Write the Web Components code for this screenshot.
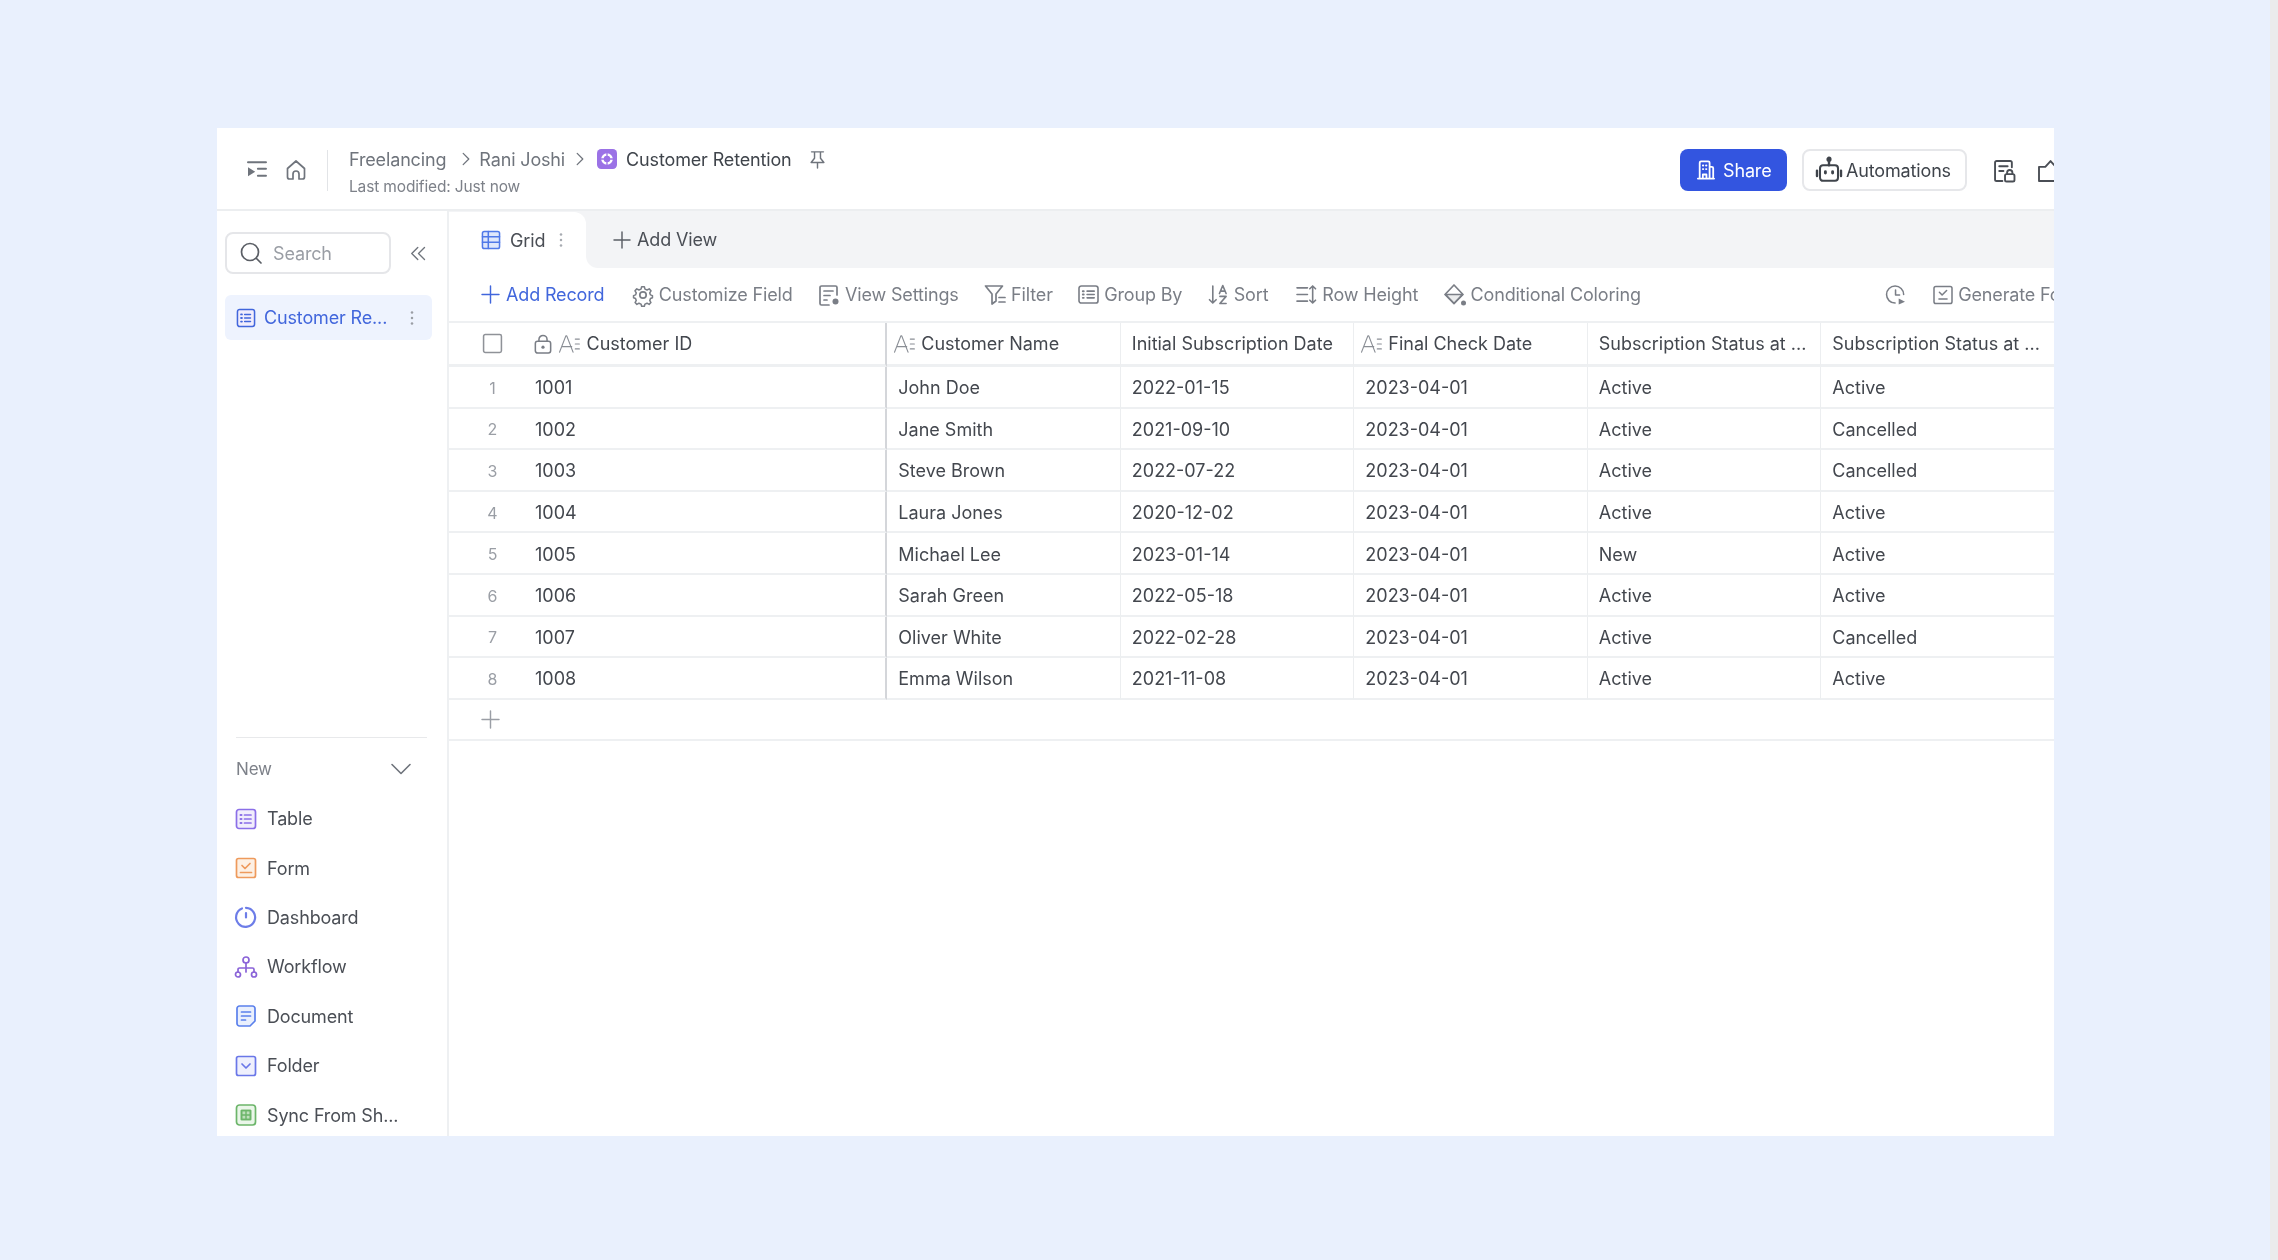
<!DOCTYPE html>
<html lang="en">
<head>
<meta charset="utf-8">
<title>Customer Retention</title>
<style>
  html, body { margin: 0; height: 100%; background: #e9f0fd; }
  body { font-family: Inter, "Liberation Sans", sans-serif; letter-spacing: -0.15px; overflow: hidden; }
</style>
</head>
<body>
<app-frame>
  <top-bar></top-bar>
  <side-bar slot="side"></side-bar>
  <view-tabs slot="main"></view-tabs>
  <tool-bar slot="main"></tool-bar>
  <data-grid slot="main"></data-grid>
</app-frame>

<script>
const ICONS = {
  collapse: `<path d="M2 3.500h20M13 10.500h9M13 18.500h9" stroke-width="2.200"/><path d="M2 9v10l8-5z" fill="currentColor" stroke="none"/>`,
  home: `<path d="M3.500 10.500 12 3l8.500 7.500V19a2 2 0 0 1-2 2H15v-5a3 3 0 0 0-6 0v5H5.500a2 2 0 0 1-2-2z"/>`,
  chevronRight: `<path d="m8 4 8 8-8 8"/>`,
  chevronDown: `<path d="m2 7 10 10L22 7"/>`,
  chevronsLeft: `<path d="m11 4-8 8 8 8M20 4l-8 8 8 8"/>`,
  pin: `<path d="M5 3h14M8.500 3v7.500l-4 5h15l-4-5V3M12 15.500V22"/>`,
  logo: `<rect x="0" y="0" width="24" height="24" rx="5" fill="#9b72e6" stroke="none"/><circle cx="12" cy="12" r="5.500" stroke="#fff" stroke-width="3"/><path d="M12 5v3M12 16v3M5 12h3M16 12h3" stroke="#9b72e6" stroke-width="1.600"/>`,
  building: `<path d="M5 21.500V4a1.500 1.500 0 0 1 1.500-1.500h8A1.500 1.500 0 0 1 16 4v17.500M16 8.500h2.500A1.500 1.500 0 0 1 20 10v11.500M3 21.500h18M8.500 21.500V17h4v4.500M8.500 7h.5M12 7h.5M8.500 11h.5M12 11h.5" stroke-width="2"/>`,
  robot: `<rect x="4.500" y="8" width="15" height="13" rx="2.500"/><path d="M12 8V4M2 12.500v4.500M22 12.500v4.500" stroke-width="2"/><circle cx="12" cy="3" r="1.300" fill="currentColor"/><path d="M9 13.500v1M15 13.500v1" stroke-width="2.400"/>`,
  docLock: `<path d="M19 9V4.500A1.500 1.500 0 0 0 17.500 3h-13A1.500 1.500 0 0 0 3 4.500v16A1.500 1.500 0 0 0 4.500 22H10M7 8h8M7 12.500h4"/><rect x="12.500" y="15.500" width="9" height="7" rx="1.500"/><path d="M14.500 15.500V14a2.500 2.500 0 0 1 5 0v1.500"/>`,
  bag: `<path d="M2 22V8.500h6L13 3l5 5.500h4V22z"/><circle cx="22" cy="15" r="2.500"/>`,
  grid: `<rect x="2.500" y="2.500" width="19" height="19" rx="2" fill="#dfe7fb"/><path d="M2.500 8.500h19M2.500 14.500h19M9 2.500v19"/>`,
  plus: `<path d="M12 2v20M2 12h20"/>`,
  dots: `<circle cx="12" cy="4" r="1.800" fill="currentColor" stroke="none"/><circle cx="12" cy="12" r="1.800" fill="currentColor" stroke="none"/><circle cx="12" cy="20" r="1.800" fill="currentColor" stroke="none"/>`,
  gear: `<path d="M10.500 3h3l.7 2.600 2.300 1 2.400-1.300 2 2.200-1.400 2.300.8 2.200 2.200.8v2.400l-2.200.8-.8 2.200 1.300 2.300-2 2-2.300-1.300-2.300 1-.7 2.500h-3l-.7-2.500-2.300-1-2.300 1.300-2-2 1.300-2.300-.8-2.200-2.200-.8v-2.400l2.200-.8.8-2.200-1.400-2.300 2-2.200 2.400 1.300 2.300-1z" transform="translate(1.200 1.100) scale(.9)"/><circle cx="12" cy="12" r="3.200"/>`,
  viewSettings: `<path d="M20 12V4.500A1.500 1.500 0 0 0 18.500 3h-14A1.500 1.500 0 0 0 3 4.500v16A1.500 1.500 0 0 0 4.500 22H12M7 8h9M7 12.500h6M7 17h3"/><circle cx="18.500" cy="18.500" r="3" fill="currentColor" stroke="none"/>`,
  filter: `<path d="M2.500 3h17l-6.500 8v7l-4 3v-10zM16 14.500h6M16 19h6"/>`,
  groupBy: `<rect x="2" y="3" width="20" height="18" rx="2.500"/><path d="M10.500 8.500H18M10.500 12H18M10.500 15.500H18"/><path d="M6 8.500h1M6 12h1M6 15.500h1" stroke-width="2"/>`,
  sort: `<path d="M6 3v18M2.500 17.500 6 21l3.500-3.500M13 11l3.500-8.500L20 11M14 8.500h5M13.500 14H20l-6.500 7.500H20"/>`,
  rowHeight: `<path d="M2 5h11M2 12h11M2 19h11M18.500 3v18M15.500 6l3-3 3 3M15.500 18l3 3 3-3"/>`,
  bucket: `<path d="M11 2 20 11.500 11 20.500 2 11.500z"/><path d="M2.500 11.500h17L11 20.500z" fill="currentColor" fill-opacity=".15"/><circle cx="20.500" cy="20" r="2.500" fill="currentColor" stroke="none"/>`,
  history: `<path d="M11 21a9.500 9.500 0 1 1 9.500-9.500M11.500 6.500V12h4.500"/><path d="M15 16l7 3.500-7 3z" fill="currentColor" stroke="none"/>`,
  generate: `<rect x="2" y="2.500" width="20" height="19" rx="2"/><path d="m8 9 3 3 5-5M7.500 16.500h9"/>`,
  checkbox: `<rect x="1.500" y="1.500" width="21" height="21" rx="2"/>`,
  lock: `<rect x="3.500" y="9" width="17" height="13" rx="2.500"/><path d="M7.500 9V7a4.500 4.500 0 0 1 9 0v2"/><circle cx="12" cy="15.500" r="1.800" fill="currentColor" stroke="none"/>`,
  textField: `<path d="m1.500 21 7-18h1l7 18M4 15h11M19 6.500h4.500M19 12h4.500M19 17.500h4.500" stroke-width="1.300"/>`,
  search: `<circle cx="11" cy="11" r="8.500"/><path d="m17.500 17.500 4.500 4.500"/>`,
  table: `<rect x="2.500" y="2.500" width="19" height="19" rx="2.500" fill="#f1edfc"/><path d="M10.500 8H17M10.500 12H17M10.500 16H17"/><path d="M6.500 8h1M6.500 12h1M6.500 16h1" stroke-width="2"/>`,
  form: `<rect x="2.500" y="2.500" width="19" height="19" rx="2" fill="#fdf0e4"/><path d="m8 9.500 3 3 5-5M6.500 16.500h11"/>`,
  dashboard: `<path d="M8 3.500a9.500 9.500 0 1 0 4-.700M12 8v4.500" stroke-width="2.200"/>`,
  workflow: `<circle cx="12" cy="5" r="3"/><circle cx="4" cy="19.500" r="2.500"/><circle cx="20" cy="19.500" r="2.500"/><path d="M12 8v5M4 17v-2.500a1.500 1.500 0 0 1 1.500-1.500h13a1.500 1.500 0 0 1 1.500 1.500V17M12 13v4"/>`,
  document: `<path d="M3 4.500A2.500 2.500 0 0 1 5.500 2h13A2.500 2.500 0 0 1 21 4.500V17l-5 5H5.500A2.500 2.500 0 0 1 3 19.500z" fill="#eaf0fd"/><path d="M7.500 8h9M7.500 12h9M7.500 16h4"/>`,
  folder: `<rect x="2.500" y="2.500" width="19" height="19" rx="2" fill="#eff0fd"/><path d="m8 10 4 4 4-4"/>`,
  sync: `<rect x="2.500" y="2" width="19" height="20" rx="3" fill="#eaf6e9"/><path d="M7.500 7.500h9v9h-9z" fill="currentColor" fill-opacity=".35"/><path d="M7.500 7.500h9v9h-9zM12 7.500v9M7.500 12h9" stroke-width="1.400"/>`
};

class UiIcon extends HTMLElement {
  connectedCallback() {
    const size = this.getAttribute('size') || 20;
    const w = this.getAttribute('w') || 1.7;
    const vb = this.getAttribute('vb') || '2 2 20 20';
    this.attachShadow({ mode: 'open' }).innerHTML = `
      <style>
        :host { display: inline-flex; flex: none; width: ${size}px; height: ${size}px; color: ${this.getAttribute('color') || 'inherit'}; }
        svg { width: 100%; height: 100%; overflow: visible; }
      </style>
      <svg viewBox="${vb}" fill="none" stroke="currentColor" stroke-width="${w}" stroke-linecap="round" stroke-linejoin="round">${ICONS[this.getAttribute('name')]}</svg>`;
  }
}
customElements.define('ui-icon', UiIcon);

class AppFrame extends HTMLElement {
  constructor() {
    super();
    this.attachShadow({ mode: 'open' }).innerHTML = `
      <style>
        :host { display: flex; width: 2278px; height: 1260px; box-sizing: border-box; padding: 128px 0 0 217px; }
        .window { width: 1837px; height: 1008px; background: #fff; overflow: hidden; display: flex; flex-direction: column; flex: none; filter: blur(.5px); }
        .body { flex: 1; display: flex; min-height: 0; }
        .main { flex: 1; min-width: 0; display: flex; flex-direction: column; }
        .edge { width: 8px; height: 1260px; margin: -128px 0 0 216px; background: #ebebec; flex: none; }
      </style>
      <div class="window">
        <slot></slot>
        <div class="body">
          <slot name="side"></slot>
          <div class="main"><slot name="main"></slot></div>
        </div>
      </div>
      <div class="edge"></div>`;
  }
}
customElements.define('app-frame', AppFrame);

class TopBar extends HTMLElement {
  constructor() {
    super();
    this.attachShadow({ mode: 'open' }).innerHTML = `
      <style>
        :host { display: flex; align-items: center; height: 83px; box-sizing: border-box; flex: none; padding: 3px 0 0 31px; border-bottom: 2px solid #eceef0; color: #6f747c; font-size: 18px; }
        .sep { width: 1px; height: 41px; background: #e2e4e7; margin: 0 21px 0 21.500px; }
        .crumbs { display: flex; flex-direction: column; gap: 6px; padding-top: 4px; }
        .path { display: flex; align-items: center; height: 24px; white-space: nowrap; }
        .sub { font-size: 15.500px; line-height: 20px; color: #7d8189; }
        .cur { color: #3f444b; }
        .actions { margin-left: auto; margin-right: -6px; display: flex; align-items: center; }
        button { font: inherit; letter-spacing: inherit; height: 42px; box-sizing: border-box; display: flex; align-items: center; border-radius: 8px; }
        .share { width: 107px; padding: 0 0 0 17px; gap: 8px; background: #3355e0; border: 0; color: #fff; }
        .auto { width: 165px; margin-left: 15px; padding: 0 0 0 13px; gap: 5px; background: #fff; border: 2px solid #e6e7ea; color: #3f444b; }
      </style>
      <ui-icon name="collapse" size="18"></ui-icon>
      <ui-icon name="home" size="20" style="margin-left:19.500px"></ui-icon>
      <div class="sep"></div>
      <div class="crumbs">
        <div class="path">
          <span>Freelancing</span>
          <ui-icon name="chevronRight" size="14" style="margin:0 6px 0 13px" w="1.800"></ui-icon>
          <span>Rani Joshi</span>
          <ui-icon name="chevronRight" size="14" style="margin:0 10px 0 8px" w="1.800"></ui-icon>
          <ui-icon name="logo" vb="0 0 24 24" size="20"></ui-icon>
          <span class="cur" style="margin-left:9px">Customer Retention</span>
          <ui-icon name="pin" size="17" style="margin-left:17px"></ui-icon>
        </div>
        <div class="sub">Last modified: Just now</div>
      </div>
      <div class="actions">
        <button class="share"><ui-icon name="building" size="18"></ui-icon>Share</button>
        <button class="auto"><ui-icon name="robot" size="24" color="#3f444b"></ui-icon>Automations</button>
        <ui-icon name="docLock" size="21" color="#4a4e55" w="1.800" style="margin-left:27px"></ui-icon>
        <ui-icon name="bag" size="21" color="#4a4e55" w="1.800" style="margin-left:24px"></ui-icon>
      </div>`;
  }
}
customElements.define('top-bar', TopBar);

class NavItem extends HTMLElement {
  connectedCallback() {
    this.attachShadow({ mode: 'open' }).innerHTML = `
      <style>
        :host { display: flex; flex: none; align-items: center; gap: 11px; height: 49.400px; color: #4a4e55; font-size: 18px; white-space: nowrap; }
      </style>
      <ui-icon name="${this.getAttribute('icon')}" size="20" color="${this.getAttribute('color')}"></ui-icon>
      <slot></slot>`;
  }
}
customElements.define('nav-item', NavItem);

class SideBar extends HTMLElement {
  constructor() {
    super();
    this.attachShadow({ mode: 'open' }).innerHTML = `
      <style>
        :host { display: flex; flex-direction: column; flex: none; width: 231.500px; box-sizing: border-box; padding: 21px 0 0 8px; border-right: 2px solid #eef0f2; font-size: 18px; overflow: hidden; }
        .top { display: flex; align-items: center; flex: none; }
        .search { width: 166px; height: 42px; box-sizing: border-box; border: 2px solid #e5e6e9; border-radius: 8px; display: flex; align-items: center; gap: 12px; padding-left: 14px; color: #9a9ea5; }
        .search ui-icon { color: #5a5e65; }
        .active { flex: none; width: 207px; height: 45px; box-sizing: border-box; margin-top: 21px; border-radius: 6px; background: #eef3fe; display: flex; align-items: center; padding: 0 13px 0 12px; gap: 9px; color: #4166dc; }
        .active span { flex: 1; white-space: nowrap; }
        .new { flex: none; margin: 396.500px 0 0 11px; width: 191px; }
        hr { border: 0; height: 1.500px; background: #e8e9eb; margin: 0; }
        .head { height: 56px; box-sizing: border-box; padding: 6px 17px 0 0; display: flex; align-items: center; justify-content: space-between; color: #7d8189; font-size: 17px; }
      </style>
      <div class="top">
        <div class="search"><ui-icon name="search" size="20"></ui-icon>Search</div>
        <ui-icon name="chevronsLeft" size="15" color="#6f747c" w="1.800" style="margin-left:20px"></ui-icon>
      </div>
      <div class="active">
        <ui-icon name="table" size="18" color="#4166dc"></ui-icon>
        <span>Customer Re...</span>
        <ui-icon name="dots" size="14" color="#9a9ea5"></ui-icon>
      </div>
      <div class="new">
        <hr>
        <div class="head">New<ui-icon name="chevronDown" size="18" color="#6f747c" w="1.800"></ui-icon></div>
        <nav-item icon="table" color="#8b6fe8">Table</nav-item>
        <nav-item icon="form" color="#ee9a5c">Form</nav-item>
        <nav-item icon="dashboard" color="#6d7de8">Dashboard</nav-item>
        <nav-item icon="workflow" color="#8a63d8">Workflow</nav-item>
        <nav-item icon="document" color="#5b80ec">Document</nav-item>
        <nav-item icon="folder" color="#6a77e8">Folder</nav-item>
        <nav-item icon="sync" color="#6cb56a">Sync From Sh...</nav-item>
      </div>`;
  }
}
customElements.define('side-bar', SideBar);

class ViewTabs extends HTMLElement {
  constructor() {
    super();
    this.attachShadow({ mode: 'open' }).innerHTML = `
      <style>
        :host { display: flex; height: 57px; flex: none; background: #f3f4f6; color: #4a4e55; font-size: 18px; }
        .tab { width: 137px; box-sizing: border-box; padding-left: 33.500px; display: flex; align-items: center; background: #fff; border-radius: 0 12px 0 0; margin-top: 1px; }
        .add { display: flex; align-items: center; gap: 7.500px; padding-left: 28px; background: #f3f4f6; border-radius: 0 0 0 12px; height: 100%; }
        .rest { flex: 1; }
        .notch { background: #fff; display: flex; }
      </style>
      <div class="tab">
        <ui-icon name="grid" size="18" color="#5079e8"></ui-icon>
        <span style="margin-left:10px">Grid</span>
        <ui-icon name="dots" size="14" color="#a7abb1" style="margin-left:9px"></ui-icon>
      </div>
      <div class="notch"><div class="add"><ui-icon name="plus" size="16" color="#5a5e65" w="1.800"></ui-icon>Add View</div></div>
      <div class="rest"></div>`;
  }
}
customElements.define('view-tabs', ViewTabs);

class ToolItem extends HTMLElement {
  connectedCallback() {
    const accent = this.hasAttribute('accent');
    this.attachShadow({ mode: 'open' }).innerHTML = `
      <style>
        :host { display: inline-flex; align-items: center; gap: ${this.getAttribute('gap') || 6}px; flex: none; white-space: nowrap; color: ${accent ? '#4166dc' : '#7a7e86'}; }
      </style>
      <ui-icon name="${this.getAttribute('icon')}" size="${this.getAttribute('size') || 20}"></ui-icon>
      <slot></slot>`;
  }
}
customElements.define('tool-item', ToolItem);

class ToolBar extends HTMLElement {
  constructor() {
    super();
    this.attachShadow({ mode: 'open' }).innerHTML = `
      <style>
        :host { display: flex; align-items: center; gap: 26.400px; height: 53px; flex: none; padding-left: 33.500px; font-size: 18px; }
      </style>
      <tool-item icon="plus" size="17" gap="7" accent style="margin-right:2px">Add Record</tool-item>
      <tool-item icon="gear">Customize Field</tool-item>
      <tool-item icon="viewSettings">View Settings</tool-item>
      <tool-item icon="filter">Filter</tool-item>
      <tool-item icon="groupBy" size="19">Group By</tool-item>
      <tool-item icon="sort" size="19" style="margin-right:2.500px">Sort</tool-item>
      <tool-item icon="rowHeight" size="19">Row Height</tool-item>
      <tool-item icon="bucket">Conditional Coloring</tool-item>
      <ui-icon name="history" size="18" color="#7a7e86" style="margin-left:219.500px"></ui-icon>
      <tool-item icon="generate" size="18" style="margin-left:3px">Generate Form</tool-item>`;
  }
}
customElements.define('tool-bar', ToolBar);

const COLS = ['Customer Name', 'Initial Subscription Date', 'Final Check Date', 'Subscription Status at ...', 'Subscription Status at ...'];
const ROWS = [
  ['1001', 'John Doe', '2022-01-15', '2023-04-01', 'Active', 'Active'],
  ['1002', 'Jane Smith', '2021-09-10', '2023-04-01', 'Active', 'Cancelled'],
  ['1003', 'Steve Brown', '2022-07-22', '2023-04-01', 'Active', 'Cancelled'],
  ['1004', 'Laura Jones', '2020-12-02', '2023-04-01', 'Active', 'Active'],
  ['1005', 'Michael Lee', '2023-01-14', '2023-04-01', 'New', 'Active'],
  ['1006', 'Sarah Green', '2022-05-18', '2023-04-01', 'Active', 'Active'],
  ['1007', 'Oliver White', '2022-02-28', '2023-04-01', 'Active', 'Cancelled'],
  ['1008', 'Emma Wilson', '2021-11-08', '2023-04-01', 'Active', 'Active']
];

class DataGrid extends HTMLElement {
  constructor() {
    super();
    const head = COLS.map((c, i) => `<div class="cell hd">${i === 0 || i === 2 ? '<ui-icon name="textField" size="18" color="#8a8e95" style="margin:0 2px 0 -3px"></ui-icon>' : ''}${c}</div>`).join('');
    const body = ROWS.map((r, i) => `
      <div class="cell first row"><span class="num">${i + 1}</span>${r[0]}</div>
      ${r.slice(1).map(v => `<div class="cell row">${v}</div>`).join('')}`).join('');
    this.attachShadow({ mode: 'open' }).innerHTML = `
      <style>
        :host { display: block; flex: none; width: 1830px; color: #43474e; font-size: 18px; letter-spacing: 0; }
        .table { display: grid; grid-template-columns: 438.800px repeat(5, 233.500px); grid-template-rows: 44px; grid-auto-rows: 41.600px; border-top: 2px solid #eef0f2; }
        .cell { display: flex; align-items: center; box-sizing: border-box; padding-left: 11px; border-right: 1.500px solid #eceef0; border-bottom: 2px solid #eef0f2; white-space: nowrap; overflow: hidden; }
        .row { padding-top: 2px; }
        .first, .hdfirst { padding-left: 0; border-right: 2px solid #d4d6da; }
        .hd { gap: 6px; border-bottom-width: 3px; }
        .num { width: 86.500px; box-sizing: border-box; padding-left: 1.500px; text-align: center; color: #9a9ea5; font-size: 16px; flex: none; }
        .add { height: 41px; box-sizing: border-box; border-bottom: 2px solid #eef0f2; display: flex; align-items: center; padding-left: 33px; }
      </style>
      <div class="table">
        <div class="cell hd hdfirst">
          <ui-icon name="checkbox" size="17" color="#8f9298" w="1.800" style="margin-left:35.500px"></ui-icon>
          <ui-icon name="lock" size="18" color="#7a7e86" style="margin-left:26.500px"></ui-icon>
          <ui-icon name="textField" size="18" color="#8a8e95" style="margin:0 3px 0 2px"></ui-icon>
          Customer ID
        </div>
        ${head}
        ${body}
      </div>
      <div class="add"><ui-icon name="plus" size="17" color="#9a9ea5"></ui-icon></div>`;
  }
}
customElements.define('data-grid', DataGrid);
</script>
</body>
</html>
